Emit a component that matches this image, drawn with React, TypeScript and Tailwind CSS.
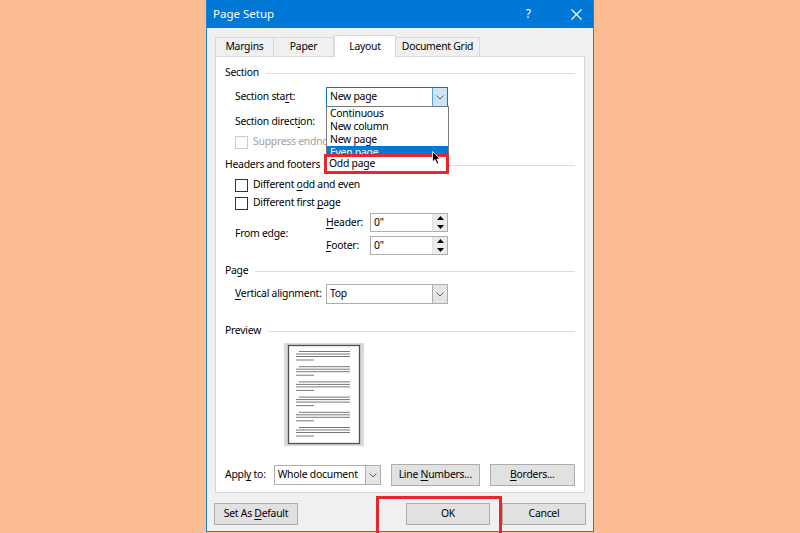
import React from "react";

const font = { fontFamily: '"Noto Sans", "Open Sans", sans-serif' };

function Key({ children }: { children: React.ReactNode }) {
    return <span className="underline underline-offset-[2px]">{children}</span>;
}

function GroupLabel({ text }: { text: string }) {
    return (
        <div className="flex h-[16px] items-center gap-[7px]">
            <span className="whitespace-nowrap">{text}</span>
            <div className="h-px flex-1 bg-[#dcdcdc]" />
        </div>
    );
}

function Chevron({ color = "#606060" }: { color?: string }) {
    return (
        <svg width="8" height="5" viewBox="0 0 8 5">
            <path d="M0.5 0.5 L4 4 L7.5 0.5" fill="none" stroke={color} strokeWidth="1" />
        </svg>
    );
}

function Combo({ value, className, open }: { value: string; className: string; open?: boolean }) {
    return (
        <div
            className={`flex h-[20px] items-stretch border bg-white ${open ? "border-[#0078d7]" : "border-[#adadad]"} ${className}`}
        >
            <div className="flex flex-1 items-center whitespace-nowrap pl-[3px]">{value}</div>
            <div
                className={`flex w-[15px] items-center justify-center border-l ${
                    open ? "border-[#569de5] bg-[#cce4f7]" : "border-[#adadad] bg-[#e5e5e5]"
                }`}
            >
                <Chevron />
            </div>
        </div>
    );
}

function Check({ label, disabled }: { label: React.ReactNode; disabled?: boolean }) {
    return (
        <div className={`flex h-[18px] items-center gap-[5px] pl-[20px] ${disabled ? "text-[#a0a0a0]" : ""}`}>
            <div className={`h-[13px] w-[13px] border bg-white ${disabled ? "border-[#cccccc]" : "border-[#333333]"}`} />
            <span className="whitespace-nowrap">{label}</span>
        </div>
    );
}

function Spin({ value }: { value: string }) {
    return (
        <div className="flex h-[19px] w-[78px] border border-[#adadad] bg-white">
            <div className="flex flex-1 items-center pl-[3px]">{value}</div>
            <div className="flex w-[15px] flex-col border-l border-[#e0e0e0]">
                <div className="flex flex-1 items-center justify-center bg-[#ececec]">
                    <svg width="7" height="4" viewBox="0 0 7 4">
                        <path d="M0 4 L3.5 0 L7 4 Z" fill="#000" />
                    </svg>
                </div>
                <div className="flex flex-1 items-center justify-center bg-[#ececec]">
                    <svg width="7" height="4" viewBox="0 0 7 4">
                        <path d="M0 0 L3.5 4 L7 0 Z" fill="#000" />
                    </svg>
                </div>
            </div>
        </div>
    );
}

function Button({ children, className = "" }: { children: React.ReactNode; className?: string }) {
    return (
        <div
            className={`flex h-[22px] items-center justify-center whitespace-nowrap border border-[#adadad] bg-[#e1e1e1] ${className}`}
        >
            {children}
        </div>
    );
}

function PreviewPage() {
    const groups = [0, 1, 2, 3, 4, 5];
    return (
        <svg width="80" height="103" viewBox="0 0 80 103">
            <rect x="0" y="0" width="80" height="103" fill="#d9d9d9" />
            <rect x="4.5" y="2.5" width="71" height="98" fill="#fff" stroke="#505050" strokeWidth="1.3" />
            {groups.map((g) => {
                const y = 8.5 + g * 15.2;
                return (
                    <g key={g} stroke="#777" strokeWidth="1">
                        <line x1="15" x2="66" y1={y} y2={y} />
                        <line x1="12" x2="66" y1={y + 2.5} y2={y + 2.5} />
                        <line x1="12" x2="66" y1={y + 5} y2={y + 5} />
                        <line x1="12" x2="30" y1={y + 8.5} y2={y + 8.5} />
                    </g>
                );
            })}
        </svg>
    );
}

export default function App() {
    const tabs = ["Margins", "Paper", "Layout", "Document Grid"];
    const tabWidths = ["w-[59px]", "w-[61px]", "w-[62px]", "w-[85px]"];
    return (
        <div
            className="flex h-[533px] w-full justify-center bg-[#fdbd92] text-[10.4px] tracking-[-0.25px] text-black"
            style={font}
        >
            <div className="flex h-[532px] w-[388px] flex-col border-x border-b border-x-[#1883d7] border-b-[#1883d7] bg-[#f0f0f0]">
                {/* Title bar */}
                <div className="flex h-[28px] items-center bg-[#0078d7] pl-[6px] text-[11.5px] tracking-normal text-white">
                    <span>Page Setup</span>
                    <span className="ml-auto mr-[40px] text-[12px]">?</span>
                    <svg width="11" height="11" viewBox="0 0 11 11" className="mr-[11px]">
                        <path d="M0.5 0.5 L10.5 10.5 M10.5 0.5 L0.5 10.5" stroke="#fff" strokeWidth="1.1" />
                    </svg>
                </div>

                <div className="flex flex-col px-[8px]">
                    {/* Tabs */}
                    <div className="mt-[7px] flex h-[21px] items-end">
                        {tabs.map((t, i) =>
                            t === "Layout" ? (
                                <div
                                    key={t}
                                    className={`relative z-10 -mb-px flex h-[22px] items-center justify-center border-x border-t border-[#d9d9d9] bg-white ${tabWidths[i]}`}
                                >
                                    {t}
                                </div>
                            ) : (
                                <div
                                    key={t}
                                    className={`-ml-px flex h-[19px] items-center justify-center border border-b-0 border-[#d9d9d9] bg-[#f0f0f0] first:ml-0 ${tabWidths[i]}`}
                                >
                                    {t}
                                </div>
                            )
                        )}
                    </div>

                    {/* Panel */}
                    <div className="flex h-[437px] flex-col border border-[#d9d9d9] bg-white px-[9px] pt-[8px]">
                        <GroupLabel text="Section" />

                        <div className="mt-[6px] flex h-[20px] items-center pl-[10px]">
                            <span className="w-[91px] whitespace-nowrap">
                                Section sta<Key>r</Key>t:
                            </span>
                            <div className="relative">
                                <Combo value="New page" open className="w-[122px]" />
                                {/* open list */}
                                <div className="absolute left-0 top-[19px] z-20 w-[123px] border border-[#7a7a7a] bg-white">
                                    {["Continuous", "New column", "New page", "Even page", "Odd page"].map((o) => (
                                        <div
                                            key={o}
                                            className={`flex h-[13px] items-center pl-[3px] ${
                                                o === "Even page" ? "bg-[#0078d7] text-white" : ""
                                            }`}
                                        >
                                            {o}
                                        </div>
                                    ))}
                                    <div className="absolute -left-[3px] top-[47px] flex h-[20px] w-[125px] items-center border-[3px] border-[#e8262b] bg-white pl-[2px]">
                                        Odd page
                                    </div>
                                    <svg
                                        width="10"
                                        height="15"
                                        viewBox="0 0 10 15"
                                        className="absolute left-[105px] top-[44px]"
                                    >
                                        <path
                                            d="M0.5 0.5 L0.5 11 L3 8.6 L5 13 L6.8 12.2 L4.9 8 L8.3 8 Z"
                                            fill="#000"
                                            stroke="#fff"
                                            strokeWidth="0.8"
                                        />
                                    </svg>
                                </div>
                            </div>
                        </div>

                        <div className="mt-[5px] flex h-[20px] items-center pl-[10px]">
                            <span className="whitespace-nowrap">
                                Section direct<Key>i</Key>on:
                            </span>
                        </div>

                        <div className="mt-[1px] -ml-[10px]">
                            <Check disabled label="Suppress endnotes" />
                        </div>

                        <div className="mt-[6px]">
                            <GroupLabel text="Headers and footers" />
                        </div>

                        <div className="mt-[3px] -ml-[10px]">
                            <Check
                                label={
                                    <>
                                        Different <Key>o</Key>dd and even
                                    </>
                                }
                            />
                        </div>
                        <div className="-ml-[10px]">
                            <Check
                                label={
                                    <>
                                        Different first <Key>p</Key>age
                                    </>
                                }
                            />
                        </div>

                        <div className="mt-[1px] flex items-center pl-[10px]">
                            <span className="w-[91px] whitespace-nowrap">From edge:</span>
                            <div className="flex flex-col gap-[4px]">
                                <div className="flex items-center">
                                    <span className="w-[44px] whitespace-nowrap">
                                        <Key>H</Key>eader:
                                    </span>
                                    <Spin value='0"' />
                                </div>
                                <div className="flex items-center">
                                    <span className="w-[44px] whitespace-nowrap">
                                        <Key>F</Key>ooter:
                                    </span>
                                    <Spin value='0"' />
                                </div>
                            </div>
                        </div>

                        <div className="mt-[8px]">
                            <GroupLabel text="Page" />
                        </div>

                        <div className="mt-[5px] flex h-[20px] items-center pl-[10px]">
                            <span className="w-[91px] whitespace-nowrap">
                                <Key>V</Key>ertical alignment:
                            </span>
                            <Combo value="Top" className="w-[122px]" />
                        </div>

                        <div className="mt-[19px]">
                            <GroupLabel text="Preview" />
                        </div>

                        <div className="mt-[4px] pl-[59px]">
                            <PreviewPage />
                        </div>

                        <div className="mt-[19px] flex h-[20px] items-center">
                            <span className="w-[49px] whitespace-nowrap">
                                Appl<Key>y</Key> to:
                            </span>
                            <Combo value="Whole document" className="w-[108px]" />
                            <Button className="ml-[10px] h-[20px] w-[89px]">
                                <span>
                                    Line <Key>N</Key>umbers...
                                </span>
                            </Button>
                            <Button className="ml-[10px] h-[20px] w-[86px]">
                                <span>
                                    <Key>B</Key>orders...
                                </span>
                            </Button>
                        </div>
                    </div>

                    {/* Bottom buttons */}
                    <div className="mt-[10px] flex items-center">
                        <Button className="-ml-px w-[84px]">
                            <span>
                                Set As <Key>D</Key>efault
                            </span>
                        </Button>
                        <div className="relative ml-auto">
                            <Button className="w-[84px] border-[#0078d7]">OK</Button>
                            <div className="absolute -left-[30px] -top-[7px] h-[40px] w-[126px] border-[3px] border-[#e8262b]" />
                        </div>
                        <Button className="-mr-px ml-[12px] w-[84px]">Cancel</Button>
                    </div>
                </div>
            </div>
        </div>
    );
}
